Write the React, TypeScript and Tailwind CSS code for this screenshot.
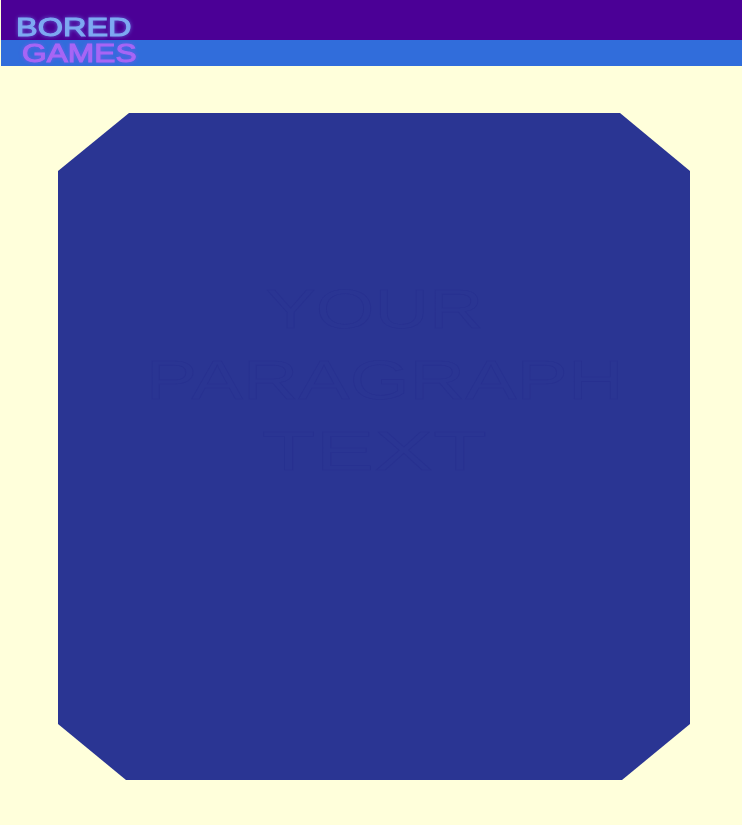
export default function App() {
  return (
    <div className="min-h-[825px] bg-[#ffffdb] pb-[45px] font-['Liberation_Sans',sans-serif]">
      <header className="ml-px">
        <div className="flex h-10 items-start bg-[#4b0096] pl-[15px] pt-[17px]">
          <span className="origin-left scale-x-[1.25] text-[26px] leading-[21px] text-[#7ea9f2] [-webkit-text-stroke:1px_#7ea9f2] [text-shadow:0_0_4px_#6a90f0] blur-[0.6px]">BORED</span>
        </div>
        <div className="flex h-[26px] items-start bg-[#316ddb] pl-[21px] pt-[3px]">
          <span className="origin-left scale-x-[1.22] text-[26px] leading-[21px] text-[#a766f5] [-webkit-text-stroke:1px_#a766f5] [text-shadow:0_0_4px_#8f50f2] blur-[0.6px]">GAMES</span>
        </div>
      </header>
      <main className="ml-[58px] mt-[47px] flex h-[667px] w-[632px] flex-col items-center justify-center bg-[#2a3593] pb-[133px] text-[55px] leading-[71px] text-[#2a3593] [-webkit-text-stroke:0.6px_#283190] [clip-path:polygon(71px_0,562px_0,632px_58px,632px_611px,564px_667px,68px_667px,0_611px,0_58px)]">
        <p className="scale-x-[1.37]">YOUR</p>
        <p className="ml-[22px] scale-x-[1.4]">PARAGRAPH</p>
        <p className="scale-x-[1.6]">TEXT</p>
      </main>
    </div>
  );
}
